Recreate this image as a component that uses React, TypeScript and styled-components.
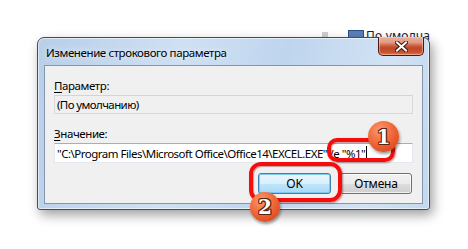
import React from "react";
import styled, { createGlobalStyle } from "styled-components";

const Global = createGlobalStyle`
  html, body { margin: 0; padding: 0; background: #ffffff; }
  body { font-family: "Noto Sans", "Open Sans", sans-serif; }
`;

const Stage = styled.div`
  position: relative;
  width: 468px;
  height: 249px;
  overflow: hidden;
  background: #ffffff;
  padding: 37px 0 0 37px;
  box-sizing: border-box;
`;

const BackWindow = styled.div`
  position: absolute;
  left: 322px;
  top: 29px;
  width: 146px;
  height: 14px;
  display: flex;
  align-items: flex-start;
  z-index: 0;
`;

const BackMark = styled.div`
  width: 6px;
  height: 6px;
  margin-top: 3px;
  background: #cfcfcf;
  margin-right: 20px;
`;

const BackIcon = styled.div`
  width: 16px;
  height: 8px;
  margin-top: 1px;
  margin-right: 2px;
  background: #5b7fb8;
  border: 1px solid #2b4d86;
  box-sizing: border-box;
`;

const BackText = styled.span`
  font-family: "Noto Sans", sans-serif;
  font-size: 12px;
  line-height: 14px;
  margin-top: 0px;
  color: #1a2030;
  letter-spacing: 0.2px;
`;

const Window = styled.div`
  position: relative;
  z-index: 1;
  width: 393px;
  height: 173px;
  box-sizing: border-box;
  border: 1px solid #414d5b;
  border-radius: 7px 7px 3px 3px;
  background: linear-gradient(100deg, #b8cfe9 0%, #cfe0f3 35%, #bfd5ee 60%, #d2e2f4 85%, #c3d8ee 100%);
  box-shadow: 3px 5px 12px rgba(0, 0, 0, 0.38), inset 0 0 0 1px rgba(255, 255, 255, 0.55);
  display: flex;
  flex-direction: column;
  padding: 0 6px 5px 6px;
`;

const TitleBar = styled.div`
  height: 27px;
  flex: none;
  display: flex;
  align-items: flex-start;
  justify-content: space-between;
`;

const TitleText = styled.div`
  font-family: "Noto Sans", sans-serif;
  font-size: 11.5px;
  line-height: 16px;
  letter-spacing: -0.4px;
  color: #000000;
  margin: 7px 0 0 2px;
  text-shadow: 0 0 6px rgba(255, 255, 255, 0.9);
`;

const CloseButton = styled.div`
  width: 46px;
  height: 19px;
  box-sizing: border-box;
  margin-top: -1px;
  margin-right: -1px;
  border: 1px solid #4a1a12;
  border-top: none;
  border-radius: 0 0 5px 5px;
  background: linear-gradient(
    to bottom,
    #e9b0a0 0%,
    #e39a84 30%,
    #cf6a4c 45%,
    #c0462a 60%,
    #c8522f 85%,
    #de7a5a 100%
  );
  box-shadow: inset 0 0 0 1px rgba(255, 210, 190, 0.5);
  display: flex;
  align-items: center;
  justify-content: center;
`;

const Client = styled.div`
  flex: 1;
  box-sizing: border-box;
  border: 1px solid #8396ad;
  background: #f0f0f0;
  padding: 12px 9px 0 9px;
  display: flex;
  flex-direction: column;
`;

const Label = styled.div<{ $top?: number }>`
  font-family: "Noto Sans", sans-serif;
  font-size: 11.5px;
  line-height: 15px;
  color: #000;
  margin-top: ${(p) => p.$top ?? 0}px;
  margin-bottom: 2px;
  letter-spacing: -0.4px;
`;

const Key = styled.span`
  text-decoration: underline;
  text-underline-offset: 2px;
`;

const Field = styled.div<{ $readonly?: boolean }>`
  height: ${(p) => (p.$readonly ? 19 : 20)}px;
  box-sizing: border-box;
  border: 1px solid ${(p) => (p.$readonly ? "#d9d9d9" : "#e2e8ee")};
  border-top-color: ${(p) => (p.$readonly ? "#d4d4d4" : "#abadb3")};
  background: ${(p) => (p.$readonly ? "#f0f0f0" : "#ffffff")};
  padding: 0 2px;
  display: flex;
  align-items: center;
  font-family: "Noto Sans", sans-serif;
  font-size: 11.5px;
  color: #000;
  white-space: nowrap;
  overflow: hidden;
`;

const FieldText = styled.span<{ $tight?: boolean }>`
  letter-spacing: ${(p) => (p.$tight ? -0.6 : -0.5)}px;
`;

const Caret = styled.span`
  display: inline-block;
  width: 1px;
  height: 14px;
  background: #000;
  margin-left: 1px;
`;

const ButtonRow = styled.div`
  margin-top: 10px;
  display: flex;
  justify-content: flex-end;
  gap: 9px;
  padding-right: 1px;
`;

const Button = styled.div<{ $default?: boolean }>`
  width: ${(p) => (p.$default ? 73 : 72)}px;
  height: 21px;
  box-sizing: border-box;
  border: 1px solid ${(p) => (p.$default ? "#3c7fb1" : "#707070")};
  border-radius: 3px;
  background: ${(p) =>
    p.$default
      ? "linear-gradient(to bottom, #eaf6fd 0%, #d9f0fc 50%, #bee6fd 51%, #a7d9f5 100%)"
      : "linear-gradient(to bottom, #f2f2f2 0%, #ebebeb 50%, #dddddd 51%, #cfcfcf 100%)"};
  box-shadow: inset 0 0 0 1px ${(p) => (p.$default ? "rgba(120,200,240,0.9)" : "rgba(255,255,255,0.7)")};
  display: flex;
  align-items: center;
  justify-content: center;
  font-family: "Noto Sans", sans-serif;
  font-size: 12px;
  letter-spacing: -0.2px;
  color: #000;
`;

const Ring = styled.div<{ $l: number; $t: number; $w: number; $h: number; $r: number }>`
  position: absolute;
  z-index: 3;
  left: ${(p) => p.$l}px;
  top: ${(p) => p.$t}px;
  width: ${(p) => p.$w}px;
  height: ${(p) => p.$h}px;
  box-sizing: border-box;
  border: 4px solid #f50c0c;
  border-radius: ${(p) => p.$r}px;
  box-shadow: 1px 1px 2px rgba(90, 0, 0, 0.45), inset 1px 1px 1px rgba(120, 0, 0, 0.35);
`;

const Badge = styled.div<{ $l: number; $t: number; $d: number }>`
  position: absolute;
  z-index: 4;
  left: ${(p) => p.$l}px;
  top: ${(p) => p.$t}px;
  width: ${(p) => p.$d}px;
  height: ${(p) => p.$d}px;
  border-radius: 50%;
  background: radial-gradient(circle at 38% 30%, #fb9a6c 0%, #f0693a 45%, #dc4a1e 80%, #c93d16 100%);
  box-shadow: 1px 2px 3px rgba(0, 0, 0, 0.4);
  display: flex;
  align-items: center;
  justify-content: center;
  font-family: "DejaVu Serif", "Liberation Serif", serif;
  font-weight: bold;
  font-size: 20px;
  color: #ffffff;
  text-shadow: 1px 0 0 #5b2412, -1px 0 0 #5b2412, 0 1px 0 #5b2412, 0 -1px 0 #5b2412,
    1px 1px 0 #5b2412, -1px -1px 0 #5b2412, 1px -1px 0 #5b2412, -1px 1px 0 #5b2412;
`;

export default function App() {
  return (
    <>
      <Global />
      <Stage>
        <BackWindow>
          <BackMark />
          <BackIcon />
          <BackText>По умолча</BackText>
        </BackWindow>
        <Window>
          <TitleBar>
            <TitleText>Изменение строкового параметра</TitleText>
            <CloseButton>
              <svg width="13" height="11" viewBox="0 0 13 11">
                <path d="M2 1.5 L11 9.5 M11 1.5 L2 9.5" stroke="#3a1a14" strokeWidth="4" strokeLinecap="square" />
                <path d="M2 1.5 L11 9.5 M11 1.5 L2 9.5" stroke="#ffffff" strokeWidth="2" strokeLinecap="square" />
              </svg>
            </CloseButton>
          </TitleBar>
          <Client>
            <Label>
              <Key>П</Key>араметр:
            </Label>
            <Field $readonly>
              <FieldText $tight>(По умолчанию)</FieldText>
            </Field>
            <Label $top={12}>
              <Key>З</Key>начение:
            </Label>
            <Field>
              <FieldText>"C:\Program Files\Microsoft Office\Office14\EXCEL.EXE" /e "%1"</FieldText>
              <Caret />
            </Field>
            <ButtonRow>
              <Button $default>OK</Button>
              <Button>Отмена</Button>
            </ButtonRow>
          </Client>
        </Window>
        <Ring $l={327} $t={138} $w={68} $h={24} $r={10} />
        <Ring $l={249} $t={162} $w={93} $h={40} $r={12} />
        <Badge $l={368} $t={121} $d={31}>1</Badge>
        <Badge $l={250} $t={192} $d={30}>2</Badge>
      </Stage>
    </>
  );
}
